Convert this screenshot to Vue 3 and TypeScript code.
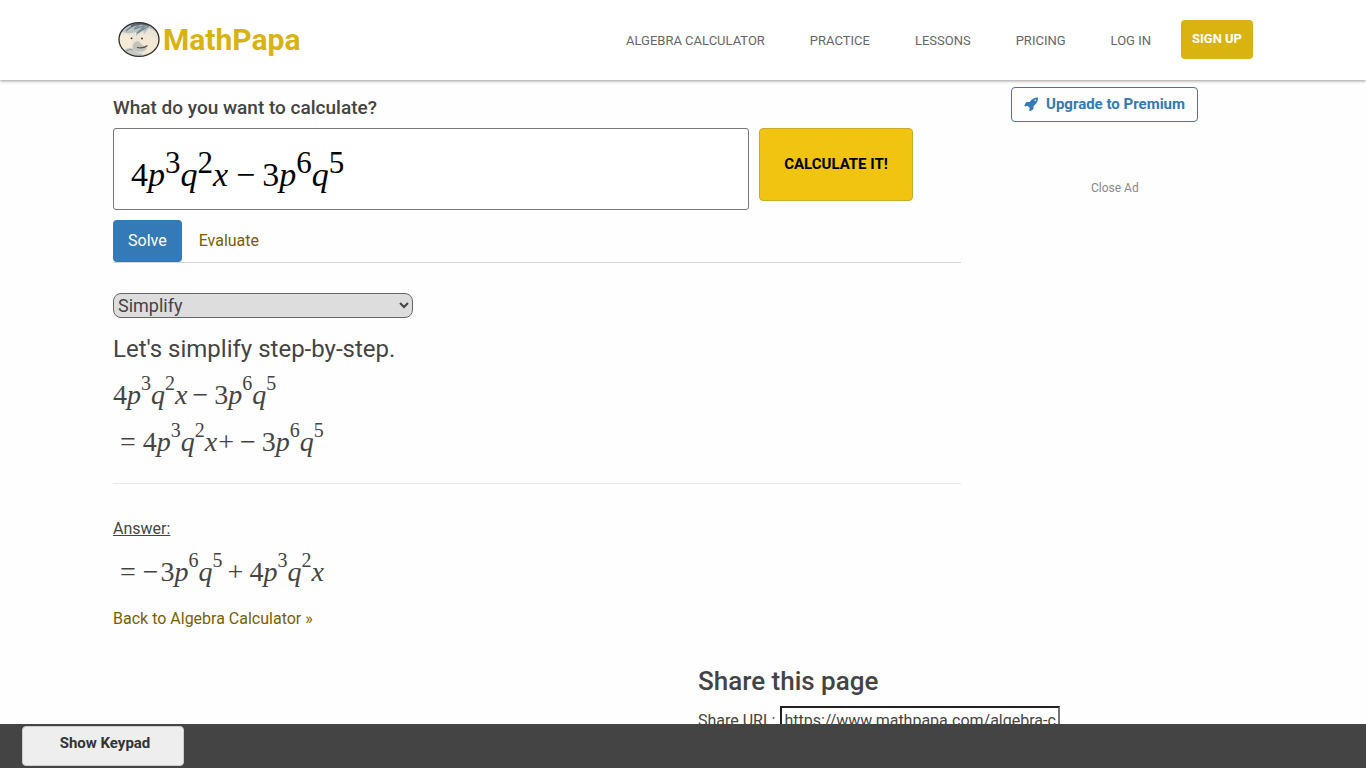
<script setup lang="ts">
import { ref } from 'vue'

interface Term {
  t: 'n' | 'v' | 's' | 'rel' | 'bin' | 'tight' | 'neg'
  v: string
}

const n = (v: string): Term => ({ t: 'n', v })
const x = (v: string): Term => ({ t: 'v', v })
const s = (v: string): Term => ({ t: 's', v })
const op = (t: Term['t'], v: string): Term => ({ t, v })

const first: Term[] = [n('4'), x('p'), s('3'), x('q'), s('2'), x('x')]
const second: Term[] = [n('3'), x('p'), s('6'), x('q'), s('5')]

const problem: Term[] = [...first, op('bin', '−'), ...second]
const step: Term[] = [op('rel', '='), ...first, op('tight', '+'), op('bin', '−'), ...second]
const answer: Term[] = [op('rel', '='), op('neg', '−'), ...second, op('bin', '+'), ...first]

const links = ['Algebra Calculator', 'Practice', 'Lessons', 'Pricing', 'Log In']
const operation = ref('Simplify')
const shareUrl = ref('https://www.mathpapa.com/algebra-calculator.html')
</script>

<template>
  <div class="page">
    <header class="top">
      <div class="container bar">
        <a class="brand" href="#">
          <svg class="face" viewBox="0 0 42 36" aria-hidden="true">
            <defs>
              <clipPath id="head"><ellipse cx="21" cy="17.5" rx="20" ry="17" /></clipPath>
            </defs>
            <g clip-path="url(#head)">
              <rect width="42" height="36" fill="#ebe3d5" />
              <path d="M1 14 Q8 11 14 14 Q15 21 12 27 L4 29Z" fill="#f5ead6" />
              <path d="M20 13 Q33 11 40 18 Q39 27 31 31 L24 23Z" fill="#f3e8d6" />
              <path d="M4 10 Q9 0 22 0 Q34 1 38 9 Q34 8 31 6 L26 12 L25 8 L18 14 L18 10 Q13 12 8 11Z" fill="#b9c3c6" />
              <path d="M8 9 Q14 3 22 2 L16 7 L28 3 L19 11 L31 4" fill="none" stroke="#7f8c92" stroke-width="1.5" />
              <path d="M13 4 Q21 0 31 3" fill="none" stroke="#58656c" stroke-width="2" />
              <path d="M17 20 Q21 18 23 22 L29 26 Q27 30 20 30 Q13 28 15 23Z" fill="#c3c1bb" />
              <path d="M6 28 Q12 24 16 28 Q19 31 25 32 L20 36 L8 34Z" fill="#c8c8c4" />
              <path d="M8 29 Q12 26 15 28" fill="none" stroke="#8f989a" />
            </g>
            <ellipse cx="21" cy="17.5" rx="20" ry="16.8" fill="none" stroke="#35302d" stroke-width="1.3" />
            <circle cx="13.5" cy="16.3" r="0.9" fill="#292724" />
            <circle cx="24" cy="16.5" r="0.9" fill="#292724" />
            <path d="M19 25.5 Q25 27 29.5 23.5" fill="none" stroke="#554d44" stroke-width="1.2" />
          </svg>
          <span>MathPapa</span>
        </a>
        <nav class="nav">
          <a v-for="link in links" :key="link" href="#">{{ link }}</a>
          <a class="signup" href="#">Sign Up</a>
        </nav>
      </div>
    </header>

    <div class="container columns">
      <main class="main">
        <h1 id="ask">What do you want to calculate?</h1>
        <div class="entry">
          <div class="mathbox" role="textbox" contenteditable="true" aria-labelledby="ask" spellcheck="false">
            <span class="math big"><span v-for="(term, i) in problem" :key="i" :class="term.t">{{ term.v }}</span></span>
          </div>
          <button class="calc" type="button">CALCULATE IT!</button>
        </div>
        <div class="tabs">
          <a class="tab active" href="#">Solve</a>
          <a class="tab" href="#">Evaluate</a>
        </div>

        <select v-model="operation" class="choice" aria-label="Operation">
          <option>Simplify</option>
          <option>Factor</option>
        </select>

        <h2 class="lead">Let's simplify step-by-step.</h2>
        <div class="math"><span v-for="(term, i) in problem" :key="i" :class="term.t">{{ term.v }}</span></div>
        <div class="math"><span v-for="(term, i) in step" :key="i" :class="term.t">{{ term.v }}</span></div>
        <hr />
        <p class="answer">Answer:</p>
        <div class="math"><span v-for="(term, i) in answer" :key="i" :class="term.t">{{ term.v }}</span></div>
        <a class="back" href="#">Back to Algebra Calculator »</a>
      </main>

      <aside class="side">
        <a class="upgrade" href="#">
          <svg viewBox="0 64 1664 1664" aria-hidden="true">
            <path fill="currentColor" d="M1440 448q0-40-28-68t-68-28-68 28-28 68 28 68 68 28 68-28 28-68zm224-288q0 249-75.5 430.500t-253.500 360.500q-81 80-195 176l-20 379q-2 16-16 26l-384 224q-7 4-16 4-12 0-23-9l-64-64q-13-14-8-32l85-276-281-281-276 85q-3 1-9 1-14 0-23-9l-64-64q-17-19-5-39l224-384q10-14 26-16l379-20q96-114 176-195 188-187 358-258t431-71q14 0 24 9.500t10 22.500z" />
          </svg>
          <span>Upgrade to Premium</span>
        </a>
        <button class="close" type="button">Close Ad</button>
      </aside>
    </div>

    <div class="container footer">
      <section class="share">
        <h2>Share this page</h2>
        <div class="url">
          <label for="share-url">Share URL:</label>
          <input id="share-url" v-model="shareUrl" type="text" />
        </div>
      </section>
    </div>

    <div class="dock">
      <button class="keypad" type="button">Show Keypad</button>
    </div>
  </div>
</template>

<style>
body {
  margin: 0;
  background: #fefefe;
}
</style>

<style scoped>
.page {
  height: 100vh;
  overflow: hidden;
  font: 16px/24px Roboto, "Liberation Sans", sans-serif;
  color: #444;
}
.page * {
  box-sizing: border-box;
}
a {
  color: #786000;
  text-decoration: none;
}
h1,
h2,
p {
  margin: 0;
}
.container {
  max-width: 1140px;
  margin: 0 auto;
}
.top {
  background: #fff;
  box-shadow: 0 1px 3px rgba(0, 0, 0, 0.4);
}
.bar {
  height: 80px;
  display: flex;
  justify-content: space-between;
  align-items: center;
}
.brand {
  display: flex;
  align-items: center;
  gap: 3px;
  padding-left: 5px;
  font-size: 30px;
  line-height: 40px;
  font-weight: 700;
  color: #d9b310;
}
.face {
  width: 42px;
  height: 36px;
}
.nav {
  display: flex;
  align-items: center;
  gap: 45px;
  font-size: 13px;
  line-height: 20px;
  text-transform: uppercase;
}
.nav a {
  color: #666;
  padding-top: 1px;
}
.nav .signup {
  margin: 0 0 2px -15px;
  padding: 9px 11px 10px;
  border-radius: 4px;
  background: #d9b310;
  color: #fff;
  font-weight: 700;
}
.columns {
  display: flex;
  gap: 30px;
}
.main {
  flex: 1;
  padding-top: 18px;
}
h1 {
  font-size: 19px;
  line-height: 20px;
  font-weight: 500;
}
.entry {
  display: flex;
  align-items: flex-start;
  gap: 10px;
  margin-top: 10px;
}
.mathbox {
  flex: 0 0 75%;
  height: 82px;
  padding: 16px 17px;
  border: 1px solid #777;
  border-radius: 3px;
  background: #fff;
  color: #000;
}
.calc {
  width: 154px;
  height: 73px;
  padding: 0 0 2px;
  border: 1px solid #c9ad2a;
  border-radius: 4px;
  background: #f0c410;
  color: #000;
  font: 700 15px Roboto, sans-serif;
}
.tabs {
  display: flex;
  gap: 2px;
  margin-top: 10px;
  border-bottom: 1px solid #d5d5d5;
}
.tab {
  padding: 9px 15px;
}
.tab.active {
  border-radius: 4px;
  background: #337ab7;
  color: #fff;
}
.choice {
  display: block;
  width: 300px;
  height: 25px;
  margin-top: 30px;
  border: 1px solid #666;
  border-radius: 8px;
  background: #ddd;
  color: #444;
  font: 18px Roboto, sans-serif;
}
.lead {
  margin: 16px 0 7px;
  font-size: 24px;
  line-height: 30px;
  font-weight: 400;
}
.math {
  display: block;
  font: 28px/47px "Liberation Serif", serif;
}
.math.big {
  font-size: 34px;
  line-height: 60px;
}
.v {
  font-style: italic;
}
.s {
  font-size: 20px;
  line-height: 0;
  vertical-align: 14px;
}
.big .s {
  font-size: 31px;
  vertical-align: 13px;
}
.bin {
  margin: 0 6px 0 5px;
}
.big .bin {
  margin: 0 7px 0 8px;
}
.rel {
  margin: 0 7px;
}
.tight {
  margin: 0 1px;
}
.neg {
  margin-right: 2px;
}
hr {
  margin: 18px 0 0;
  border: 0;
  border-top: 1px solid #e8e8e8;
}
.answer {
  margin: 33px 0 7px;
  text-decoration: underline;
}
.back {
  display: block;
  margin-top: 12px;
}
.side {
  width: 262px;
  padding: 7px 0 0 20px;
  display: flex;
  flex-direction: column;
  align-items: flex-start;
}
.upgrade {
  display: flex;
  align-items: center;
  gap: 8px;
  padding: 6px 12px 7px;
  border: 1px solid #337ab7;
  border-radius: 4px;
  color: #337ab7;
  font-size: 15px;
  line-height: 20px;
  font-weight: 700;
}
.upgrade svg {
  width: 14px;
  height: 14px;
}
.close {
  margin: 58px 0 0 80px;
  padding: 0;
  border: 0;
  background: none;
  color: #888;
  font: 12px/16px Roboto, sans-serif;
}
.footer {
  display: grid;
  grid-template-columns: 1fr 1fr;
  gap: 30px;
  padding-top: 35px;
}
.share {
  grid-column: 2;
}
.share h2 {
  font-size: 26px;
  line-height: 30px;
  font-weight: 500;
}
.url {
  display: flex;
  align-items: center;
  gap: 5px;
  margin-top: 10px;
}
.url label {
  padding-top: 2px;
}
.url input {
  width: 280px;
  height: 28px;
  padding: 1px 2px;
  border: 2px inset #767676;
  background: #fff;
  color: #444;
  font: 16px Roboto, sans-serif;
}
.dock {
  position: fixed;
  left: 0;
  right: 0;
  bottom: 0;
  padding: 2px 22px;
  background: #444;
}
.keypad {
  display: block;
  width: 162px;
  height: 40px;
  padding: 0 0 6px 4px;
  border: 1px solid #ccc;
  border-radius: 4px;
  background: #eee;
  color: #333;
  font: 700 15px Roboto, sans-serif;
}
</style>
